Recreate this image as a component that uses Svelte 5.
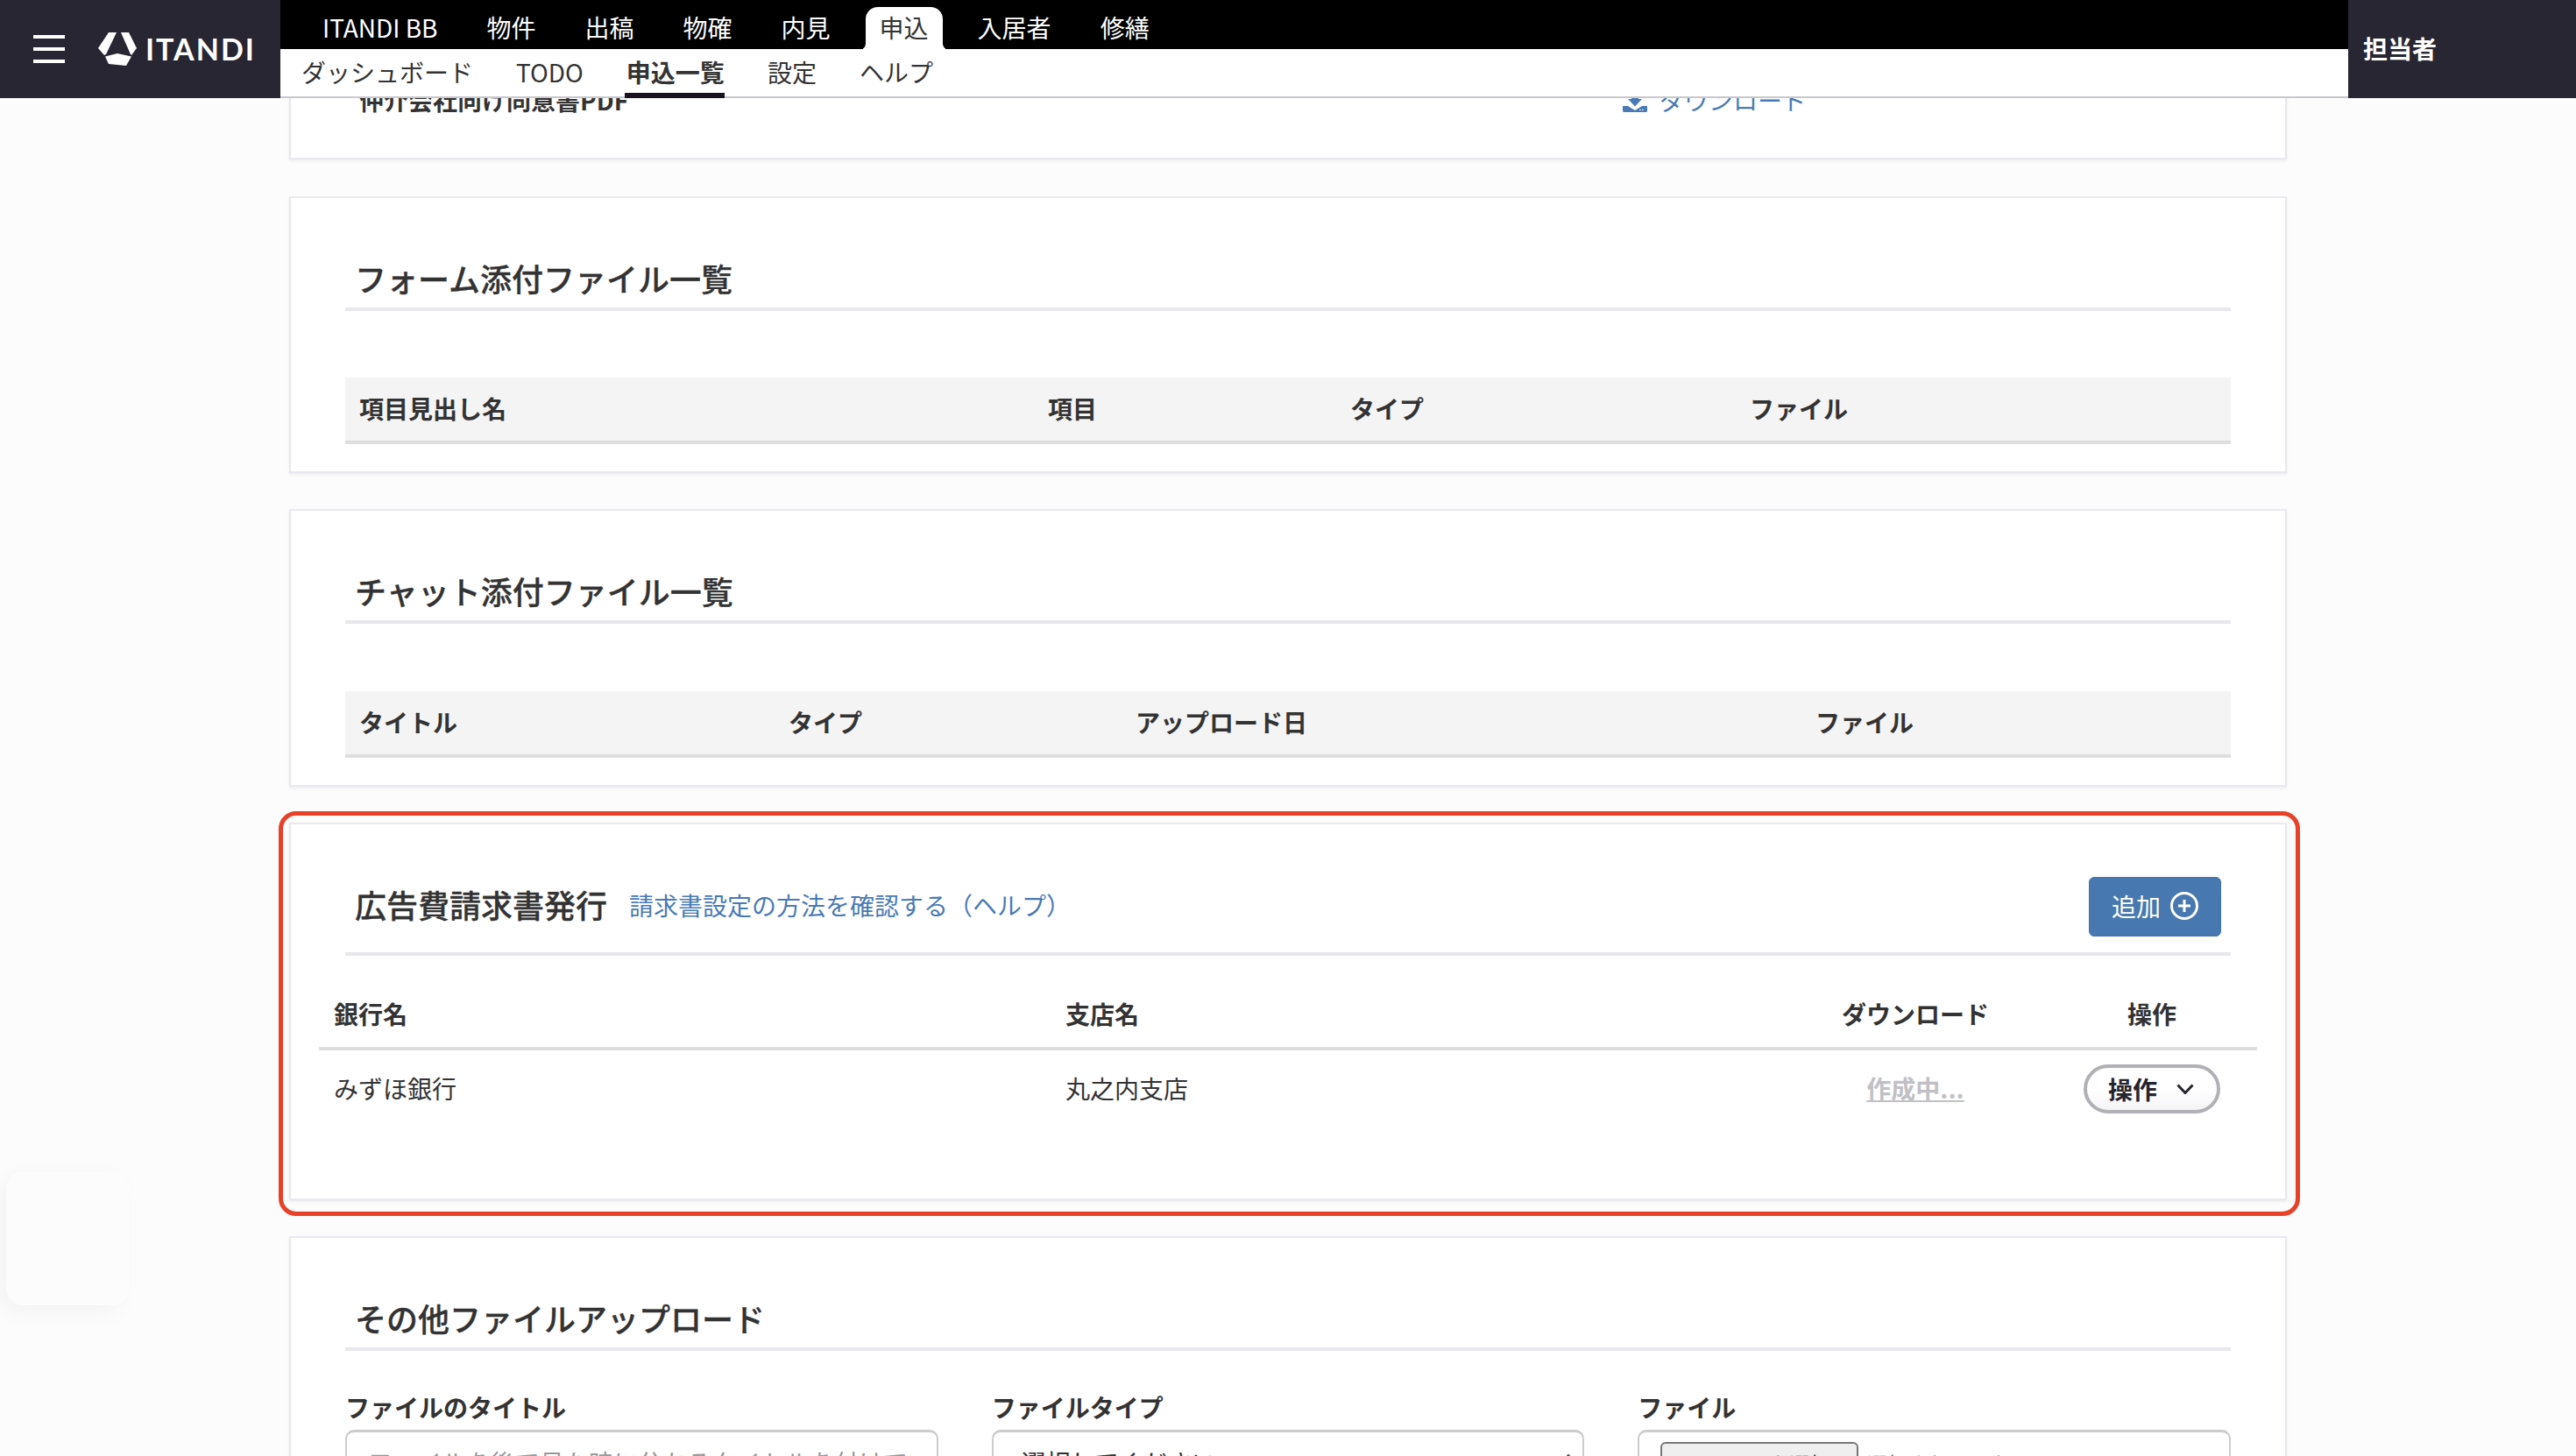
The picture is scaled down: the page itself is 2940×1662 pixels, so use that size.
<script>
  const mainTabs = ["ITANDI BB", "物件", "出稿", "物確", "内見", "申込", "入居者", "修繕"];
  const subTabs = ["ダッシュボード", "TODO", "申込一覧", "設定", "ヘルプ"];
  const formCols = ["項目見出し名", "項目", "タイプ", "ファイル"];
  const chatCols = ["タイトル", "タイプ", "アップロード日", "ファイル"];
</script>

<div class="page">
  <header class="header">
    <div class="brand">
      <div class="burger"><span></span><span></span><span></span></div>
      <svg class="logo" viewBox="0 0 44 40" width="44" height="40" aria-hidden="true">
        <path d="M12 1H21L9 26 7 27 0 19Z" />
        <path d="M26 1H35L44 19 38 27 37 26Z" />
        <path d="M8 28.500 22 25 38 28.500 32 39 12 37Z" />
      </svg>
      <span class="wordmark">ITANDI</span>
    </div>

    <nav class="nav">
      <div class="main-tabs">
        {#each mainTabs as tab}
          <span class="main-tab" class:active={tab === "申込"}>{tab}</span>
        {/each}
      </div>
      <div class="sub-tabs">
        {#each subTabs as tab}
          <span class="sub-tab" class:active={tab === "申込一覧"}>{tab}</span>
        {/each}
      </div>
    </nav>

    <div class="user">担当者</div>
  </header>

  <main class="content">
    <section class="card pdf-card">
      <div class="pdf-row">
        <strong>仲介会社向け同意書PDF</strong>
        <span class="link download">
          <svg viewBox="0 0 28 28" width="28" height="28" aria-hidden="true">
            <path d="M0 21H6L14 26 22 21H28V26.500Q28 28 26.500 28H1.500Q0 28 0 26.500Z" />
            <path d="M10 2H18V13H22L14 21.500 6 13H10Z" />
            <circle cx="20" cy="25.500" r="0.800" fill="#fff" />
            <circle cx="22.800" cy="25.500" r="0.800" fill="#fff" />
          </svg>
          ダウンロード
        </span>
      </div>
    </section>

    <section class="card">
      <h2 class="section-title">フォーム添付ファイル一覧</h2>
      <div class="gray-head form-cols">
        {#each formCols as col}<span>{col}</span>{/each}
      </div>
    </section>

    <section class="card">
      <h2 class="section-title">チャット添付ファイル一覧</h2>
      <div class="gray-head chat-cols">
        {#each chatCols as col}<span>{col}</span>{/each}
      </div>
    </section>

    <section class="card invoice-card">
      <div class="highlight"></div>
      <div class="invoice-head">
        <h2>広告費請求書発行</h2>
        <span class="link help">請求書設定の方法を確認する（ヘルプ）</span>
        <button class="add-btn">
          追加
          <svg viewBox="0 0 32 32" width="32" height="32" aria-hidden="true">
            <circle cx="16" cy="16" r="14.500" />
            <path d="M16 9V23M9 16H23" />
          </svg>
        </button>
      </div>

      <div class="invoice-table">
        <div class="invoice-row th">
          <span>銀行名</span>
          <span>支店名</span>
          <span class="center">ダウンロード</span>
          <span class="op">操作</span>
        </div>
        <div class="invoice-row td">
          <span class="cell">みずほ銀行</span>
          <span class="cell">丸之内支店</span>
          <span class="cell center pending">作成中...</span>
          <span class="op">
            <button class="op-btn">
              操作
              <svg viewBox="0 0 20 12" width="20" height="12" aria-hidden="true">
                <path d="M1.500 1.500 10 10.500 18.500 1.500" />
              </svg>
            </button>
          </span>
        </div>
      </div>
    </section>

    <section class="card">
      <h2 class="section-title">その他ファイルアップロード</h2>
      <div class="upload-form">
        <div class="field">
          <span class="field-label">ファイルのタイトル</span>
          <div class="box placeholder">ファイルを後で見た時に分かるタイトルを付けて</div>
        </div>
        <div class="field">
          <span class="field-label">ファイルタイプ</span>
          <div class="box select">
            選択してください
            <svg viewBox="0 0 16 10" width="16" height="10" aria-hidden="true">
              <path d="M1 9 8 2 15 9" />
            </svg>
          </div>
        </div>
        <div class="field">
          <span class="field-label">ファイル</span>
          <div class="box file">
            <span class="file-btn">ファイルを選択</span>
            <span class="file-name">選択されていません</span>
          </div>
        </div>
      </div>
    </section>
  </main>

  <div class="float-widget"></div>
</div>

<style>
  :global(body) {
    margin: 0;
  }

  .page {
    position: relative;
    width: 2940px;
    height: 1662px;
    overflow: hidden;
    background: #fcfcfc;
    color: #333;
    font-family: "Noto Sans CJK JP", "Noto Sans", sans-serif;
    font-size: 28px;
  }

  /* header */
  .header {
    position: relative;
    z-index: 5;
    display: flex;
    height: 112px;
  }

  .brand {
    display: flex;
    align-items: center;
    width: 320px;
    flex: none;
    background: #282632;
    color: #fff;
  }

  .burger {
    display: flex;
    flex-direction: column;
    gap: 10px;
    width: 36px;
    margin-left: 38px;
  }

  .burger span {
    height: 4px;
    background: #fff;
  }

  .logo {
    margin-left: 38px;
    fill: #fff;
  }

  .wordmark {
    margin-left: 10px;
    font-family: Lato, "Noto Sans", sans-serif;
    font-weight: 700;
    font-size: 34px;
    letter-spacing: 2px;
    line-height: 1;
  }

  .nav {
    flex: 1;
    display: flex;
    flex-direction: column;
  }

  .main-tabs {
    display: flex;
    align-items: flex-end;
    gap: 24px;
    height: 56px;
    padding-left: 32px;
    background: #000;
  }

  .main-tab {
    position: relative;
    height: 48px;
    padding: 0 16px;
    line-height: 46px;
    color: #fff;
    white-space: nowrap;
  }

  .main-tab.active {
    background: #fff;
    color: #333;
    border-radius: 14px 14px 0 0;
  }

  .main-tab.active::before,
  .main-tab.active::after {
    content: "";
    position: absolute;
    bottom: 0;
    width: 6px;
    height: 10px;
    background: #000;
  }

  .main-tab.active::before {
    left: -6px;
    border-bottom-right-radius: 6px;
    box-shadow: 3px 3px 0 #fff;
  }

  .main-tab.active::after {
    right: -6px;
    border-bottom-left-radius: 6px;
    box-shadow: -3px 3px 0 #fff;
  }

  .sub-tabs {
    display: flex;
    gap: 49px;
    height: 54px;
    padding-left: 24px;
    background: #fff;
    border-bottom: 2px solid #c8c8cc;
  }

  .sub-tab {
    position: relative;
    line-height: 53px;
    white-space: nowrap;
  }

  .sub-tab.active {
    font-weight: 700;
  }

  .sub-tab.active::after {
    content: "";
    position: absolute;
    left: -2px;
    right: 0;
    bottom: -2px;
    height: 6px;
    background: #18141f;
  }

  .user {
    width: 243px;
    flex: none;
    padding-left: 17px;
    background: #282632;
    color: #fff;
    font-weight: 700;
    line-height: 110px;
  }

  /* cards */
  .content {
    display: flex;
    flex-direction: column;
    gap: 41.5px;
    padding: 0 330px;
  }

  .card {
    position: relative;
    box-sizing: border-box;
    padding: 68px 62px 31px;
    background: #fff;
    border: 2px solid #e9e9ee;
    box-shadow: 0 2px 3px rgba(60, 60, 80, 0.08);
  }

  .section-title {
    margin: 0;
    height: 57px;
    padding-left: 11px;
    border-bottom: 4px solid #e8e8ec;
    font-size: 36px;
    font-weight: 500;
    -webkit-text-stroke: 0.3px currentColor;
    line-height: 46px;
    box-sizing: content-box;
  }

  .pdf-card {
    height: 100px;
    margin-top: -30px;
    padding: 0;
    border-top: 0;
  }

  .pdf-row {
    display: grid;
    grid-template-columns: 1442px auto;
    align-items: center;
    height: 63px;
    padding-left: 78px;
  }

  .link {
    color: #4a7ab5;
  }

  .download {
    display: flex;
    align-items: center;
    gap: 14px;
  }

  .download svg {
    fill: #4a7ab5;
  }

  .gray-head {
    display: grid;
    height: 70px;
    margin-top: 76px;
    padding: 0 0 2px 16px;
    align-items: center;
    background: #f4f4f4;
    border-bottom: 4px solid #dedede;
    font-weight: 700;
  }

  .form-cols {
    grid-template-columns: 786px 345px 456px 1fr;
  }

  .chat-cols {
    grid-template-columns: 490px 396px 776px 1fr;
    margin-top: 77px;
  }

  /* highlighted invoice card */
  .invoice-card {
    height: 431px;
    margin-top: -1px;
    padding-top: 60px;
  }

  .highlight {
    position: absolute;
    top: -15px;
    left: -14px;
    right: -17px;
    bottom: -20px;
    border: 5px solid #e8412a;
    border-radius: 20px;
    pointer-events: none;
  }

  .invoice-head {
    display: flex;
    align-items: center;
    padding: 0 11px 18px;
    border-bottom: 4px solid #e8e8ec;
  }

  .invoice-head h2 {
    margin: 0 26px 0 0;
    padding-bottom: 5px;
    font-size: 36px;
    font-weight: 500;
    -webkit-text-stroke: 0.3px currentColor;
    line-height: 52px;
  }

  .help {
    padding-bottom: 4px;
    margin-left: -1px;
  }

  .add-btn {
    display: flex;
    align-items: center;
    gap: 11px;
    box-sizing: border-box;
    width: 151px;
    height: 68px;
    margin-left: auto;
    padding: 0 0 2px 25px;
    background: #4878b0;
    color: #fff;
    border: 1px solid #4272ab;
    border-radius: 6px;
    font: inherit;
  }

  .add-btn svg {
    fill: none;
    stroke: #fff;
    stroke-width: 3;
  }

  .invoice-table {
    margin: 0 -30px;
  }

  .invoice-row {
    display: grid;
    grid-template-columns: 835px 870px 200px 260px;
    align-items: center;
    padding-left: 17px;
  }

  .th {
    height: 76px;
    padding-top: 28px;
    border-bottom: 4px solid #dedede;
    font-weight: 700;
  }

  .td {
    height: 88px;
  }

  .cell {
    padding-bottom: 2px;
  }

  .center {
    text-align: center;
    white-space: nowrap;
  }

  .op {
    display: flex;
    justify-content: center;
    width: 180px;
    margin-left: 80px;
  }

  .pending {
    color: #c0c0c5;
    font-weight: 700;
    text-decoration: underline;
  }

  .op-btn {
    display: flex;
    flex: none;
    align-items: center;
    gap: 22px;
    box-sizing: border-box;
    width: 156px;
    height: 56px;
    padding: 0 0 0 24px;
    background: linear-gradient(#fff 50%, #f4f4f8);
    border: 4px solid #b0b0b5;
    border-radius: 28px;
    color: #26242f;
    font: inherit;
    font-weight: 700;
  }

  .op-btn svg {
    fill: none;
    stroke: #26242f;
    stroke-width: 3;
  }

  /* upload form */
  .upload-form {
    display: grid;
    grid-template-columns: repeat(3, 1fr);
    gap: 61px;
    margin-top: 44px;
  }

  .field {
    display: flex;
    flex-direction: column;
    min-width: 0;
  }

  .field-label {
    height: 40px;
    margin-bottom: 6px;
    font-weight: 700;
    line-height: 40px;
  }

  .box {
    position: relative;
    display: flex;
    align-items: center;
    box-sizing: border-box;
    height: 72px;
    padding: 0 24px;
    border: 2px solid #ccc;
    border-top-width: 3px;
    border-radius: 10px;
    white-space: nowrap;
    overflow: hidden;
  }

  .placeholder {
    color: #999;
  }

  .select {
    color: #333;
    padding-left: 32px;
  }

  .select svg {
    position: absolute;
    top: 24px;
    right: 8px;
    fill: none;
    stroke: #555;
    stroke-width: 2;
  }

  .file {
    align-items: flex-start;
    gap: 10px;
    padding-top: 11px;
    font-size: 23px;
    color: #555;
  }

  .file-btn {
    box-sizing: border-box;
    width: 226px;
    height: 48px;
    line-height: 44px;
    text-align: center;
    background: #efefef;
    border: 2px solid #767676;
    border-radius: 6px;
    color: #222;
  }

  .file-name {
    line-height: 48px;
  }

  .float-widget {
    position: absolute;
    left: 7px;
    top: 1337px;
    width: 140px;
    height: 153px;
    border-radius: 20px;
    background: #fcfcfc;
    box-shadow: -8px 8px 26px rgba(0, 0, 0, 0.04);
  }
</style>
